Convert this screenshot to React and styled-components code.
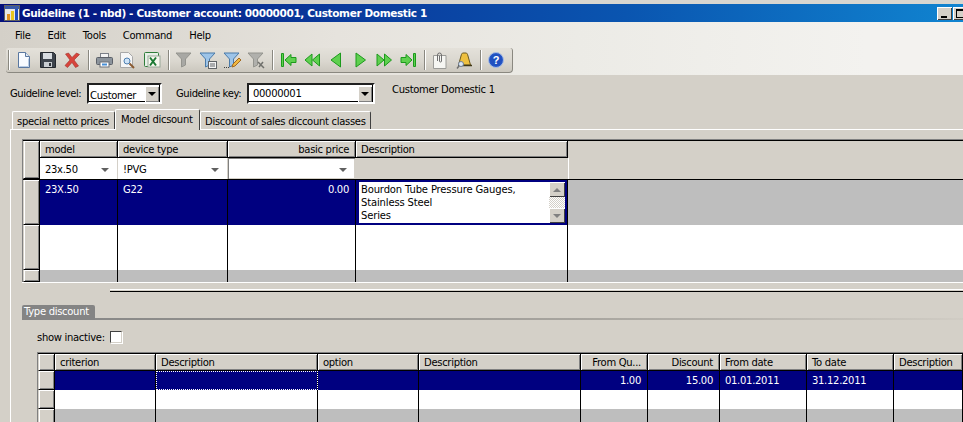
import React from 'react';
import styled, {createGlobalStyle} from 'styled-components';

const Global = createGlobalStyle`
	html, body {
		margin: 0;
		padding: 0;
		background: #d4d0c8;
	}
	body {
		font-family: "DejaVu Sans", sans-serif;
		font-size: 10px;
		letter-spacing: -0.3px;
		color: #000;
	}
`;

const Page = styled.div`
	width: 963px;
	height: 422px;
	overflow: hidden;
	background: #d4d0c8;
	display: flex;
	flex-direction: column;
`;

const TitleBar = styled.div`
	height: 18px;
	flex: none;
	border-top: 4px solid #d8d6d0;
	background: linear-gradient(90deg, #04107c 0%, #0a3a9c 35%, #0a55b0 65%, #1084d0 100%);
	display: flex;
	align-items: center;
	padding-left: 4px;
	gap: 2px;
`;

const TitleText = styled.span`
	color: #fff;
	font-weight: bold;
	font-size: 10.5px;
	letter-spacing: -0.37px;
	white-space: nowrap;
	flex: 1;
`;

const WinButton = styled.div`
	width: 15px;
	height: 13px;
	flex: none;
	background: #d4d0c8;
	box-shadow: inset 1px 1px 0 #fff, inset -1px -1px 0 #404040;
	position: relative;
	&::after {
		content: '';
		position: absolute;
		left: ${(p) => (p.$kind === 'min' ? '4px' : '3px')};
		top: ${(p) => (p.$kind === 'min' ? '9px' : '2px')};
		width: ${(p) => (p.$kind === 'min' ? '6px' : '9px')};
		height: ${(p) => (p.$kind === 'min' ? '2px' : '6px')};
		background: ${(p) => (p.$kind === 'min' ? '#000' : 'transparent')};
		border: ${(p) => (p.$kind === 'min' ? 'none' : '1px solid #000')};
		border-top-width: ${(p) => (p.$kind === 'min' ? '0' : '2px')};
	}
`;

const WinButtons = styled.div`
	display: flex;
	gap: 1px;
	margin-right: -5px;
`;

const TopBand = styled.div`
	height: 53px;
	flex: none;
	background: linear-gradient(90deg, #d4d0c8 0%, #e6e3dd 35%, #ecebe6 60%, #f3f2ef 90%);
`;

const MenuBar = styled.div`
	height: 26px;
	display: flex;
	align-items: center;
	padding-left: 15px;
	gap: 17px;
`;

const MenuItem = styled.span`
	display: block;
`;

const Toolbar = styled.div`
	width: 504px;
	height: 24px;
	margin-left: 6px;
	padding-left: 2px;
	display: flex;
	align-items: center;
	box-sizing: content-box;
	border-radius: 3px 3px 4px 3px;
	background: linear-gradient(180deg, #e4e1da 0%, #dad7cf 55%, #cbc7be 100%);
	border-bottom: 1px solid #8a8880;
	border-right: 1px solid #8a8880;
`;

const Grip = styled.div`
	width: 1px;
	height: 20px;
	background: #8a8880;
	border-right: 1px solid #fff;
	margin-right: 2px;
	flex: none;
`;

const ToolButton = styled.div`
	width: 24px;
	height: 24px;
	flex: none;
	display: flex;
	align-items: center;
	justify-content: center;
`;

const ToolSep = styled.div`
	width: 8px;
	flex: none;
	display: flex;
	justify-content: center;
	&::after {
		content: '';
		width: 1px;
		height: 20px;
		background: #8a8880;
		box-shadow: 1px 0 0 #fff;
	}
`;

const LookupRow = styled.div`
	height: 26px;
	flex: none;
	padding: 8px 0 0 10px;
	display: flex;
	align-items: flex-start;
`;

const FieldLabel = styled.span`
	width: ${(p) => p.$w}px;
	flex: none;
	line-height: 21px;
	letter-spacing: -0.4px;
	white-space: nowrap;
`;

const Combo = styled.div`
	width: ${(p) => p.$w}px;
	height: 21px;
	box-sizing: border-box;
	flex: none;
	background: #fff;
	border: 2px solid;
	border-color: #202020 #fff #fff #202020;
	display: flex;
	align-items: center;
	justify-content: space-between;
	padding-left: ${(p) => p.$pad}px;
	margin-right: ${(p) => p.$gap}px;
	box-shadow: inset -1px -1px 0 #000;
`;

const ComboValue = styled.span`
	padding-top: ${(p) => p.$drop}px;
`;

const ComboButton = styled.div`
	width: 14px;
	height: 16px;
	margin-right: 1px;
	background: #d4d0c8;
	box-shadow: inset 1px 1px 0 #fff, inset -1px -1px 0 #808080;
	display: flex;
	align-items: center;
	justify-content: center;
	flex: none;
	&::after {
		content: '';
		border: 4px solid transparent;
		border-top: 4px solid #000;
		border-bottom: 0;
	}
`;

const InfoText = styled.span`
	line-height: 14px;
`;

const TabStrip = styled.div`
	height: 20px;
	flex: none;
	padding-left: 12px;
	display: flex;
	align-items: flex-end;
	position: relative;
	z-index: 1;
`;

const Tab = styled.div`
	height: ${(p) => (p.$active ? 21 : 18)}px;
	box-sizing: border-box;
	margin-bottom: ${(p) => (p.$active ? -1 : 0)}px;
	width: ${(p) => p.$w}px;
	background: #d4d0c8;
	border-top: 1px solid #fff;
	border-left: 1px solid #fff;
	border-right: 1px solid #404040;
	border-top-left-radius: 2px;
	border-top-right-radius: 2px;
	padding-left: ${(p) => (p.$active ? 5 : 4)}px;
	line-height: 20px;
	white-space: nowrap;
`;

const TabPanel = styled.div`
	flex: 1;
	margin-left: 10px;
	border-top: 1px solid #fff;
	border-left: 1px solid #fff;
	padding: 9px 0 0 11px;
	display: flex;
	flex-direction: column;
	min-height: 0;
`;

const Table = styled.div`
	border-top: 1px solid #808080;
	border-left: 1px solid #808080;
	display: flex;
	flex-direction: column;
	flex: none;
`;

const Row = styled.div`
	display: flex;
	height: ${(p) => p.$h}px;
	flex: none;
	background: ${(p) => p.$bg || 'transparent'};
	border-top: ${(p) => (p.$rule ? '1px solid #000' : 'none')};
`;

const RowHead = styled.div`
	width: 17px;
	box-sizing: border-box;
	flex: none;
	background: #d4d0c8;
	border-left: 1px solid #d4d0c8;
	border-right: 1px solid #000;
	border-bottom: 1px solid #000;
	box-shadow: inset 1px 1px 0 #fff, inset -1px -1px 0 #808080;
`;

const HeadStack = styled.div`
	display: flex;
	flex: 1;
	flex-direction: column;
	min-width: 0;
`;

const Cell = styled.div`
	width: ${(p) => p.$w}px;
	flex: ${(p) => (p.$fill ? 1 : 'none')};
	box-sizing: border-box;
	background: ${(p) => p.$bg || 'transparent'};
	border-right: ${(p) => (p.$fill ? 'none' : '1px solid #000')};
	padding: ${(p) => (p.$right ? '3px 6px 0 0' : '3px 0 0 5px')};
	text-align: ${(p) => (p.$right ? 'right' : 'left')};
	color: ${(p) => (p.$sel ? '#fff' : '#000')};
	line-height: 13px;
	white-space: nowrap;
	overflow: hidden;
`;

const HeaderCell = styled.div`
	width: ${(p) => p.$w}px;
	flex: none;
	box-sizing: border-box;
	background: #d4d0c8;
	border-right: 1px solid #000;
	border-bottom: 1px solid #000;
	box-shadow: inset 1px 1px 0 #fff, inset -1px -1px 0 #808080;
	padding: ${(p) => (p.$right ? '0 6px 0 0' : '0 0 0 5px')};
	text-align: ${(p) => (p.$right ? 'right' : 'left')};
	line-height: 18px;
	white-space: nowrap;
	overflow: hidden;
`;

const HeaderBlank = styled.div`
	flex: 1;
	background: #d4d0c8;
`;

const FilterCell = styled.div`
	width: ${(p) => p.$w}px;
	flex: none;
	box-sizing: border-box;
	background: #fff;
	padding: 2px 8px 0 5px;
	display: flex;
	align-items: center;
	justify-content: space-between;
	border-right: 1px solid #d4d0c8;
	box-shadow: ${(p) => (p.$boxed ? 'inset 1px 1px 0 #808080, inset -1px -1px 0 #d4d0c8' : 'none')};
`;

const FilterArrow = styled.span`
	border: 4px solid transparent;
	border-top: 4px solid #606060;
	border-bottom: 0;
	margin-left: auto;
`;

const FilterBlank = styled.div`
	width: ${(p) => p.$w}px;
	flex: ${(p) => (p.$w ? 'none' : 1)};
	background: #d4d0c8;
	border-left: ${(p) => (p.$edge ? '1px solid #fff' : 'none')};
`;

const MemoCell = styled.div`
	width: 212px;
	flex: none;
	box-sizing: border-box;
	background: #000080;
	border-right: 1px solid #000;
	padding: 2px 2px 2px 3px;
`;

const Memo = styled.div`
	height: 41px;
	background: #fff;
	display: flex;
	padding-left: 2px;
`;

const MemoText = styled.div`
	flex: 1;
	line-height: 13px;
	letter-spacing: -0.15px;
	white-space: nowrap;
	padding-top: 1px;
`;

const Scroll = styled.div`
	width: 16px;
	flex: none;
	display: flex;
	flex-direction: column;
	background-color: #fff;
	background-image: conic-gradient(#d4d0c8 25%, #fff 0 50%, #d4d0c8 0 75%, #fff 0);
	background-size: 2px 2px;
	justify-content: space-between;
`;

const ScrollButton = styled.div`
	height: 15px;
	background: #d4d0c8;
	box-shadow: inset 1px 1px 0 #fff, inset -1px -1px 0 #404040;
	display: flex;
	align-items: center;
	justify-content: center;
	&::after {
		content: '';
		border: 4px solid transparent;
		${(p) => (p.$up ? 'border-bottom: 4px solid #808080; border-top: 0;' : 'border-top: 4px solid #808080; border-bottom: 0;')}
	}
`;

const Splitter = styled.div`
	flex: none;
	height: 1px;
	margin: 6px 0 0 88px;
	border-top: 1px solid #fff;
	border-bottom: 1px solid #000;
`;

const EdgeLine = styled.div`
	flex: none;
	height: 1px;
	background: #fff;
`;

const SectionHead = styled.div`
	flex: none;
	height: 15px;
	margin-top: 13px;
	display: flex;
	align-items: flex-end;
	background: linear-gradient(90deg, #848484 0%, #a8a59f 60%, #d0ccc4 100%) bottom / 100% 2px no-repeat;
`;

const SectionTitle = styled.div`
	width: 73px;
	height: 15px;
	box-sizing: border-box;
	background: #848484;
	color: #fff;
	border-radius: 2px 2px 0 0;
	padding-left: 2px;
	line-height: 14px;
`;

const InactiveRow = styled.div`
	flex: none;
	height: 14px;
	margin: 10px 0 8px 15px;
	display: flex;
	align-items: center;
	gap: 5px;
`;

const CheckBox = styled.div`
	width: 12px;
	height: 12px;
	box-sizing: border-box;
	background: #fff;
	border: 1px solid;
	border-color: #404040 #d4d0c8 #d4d0c8 #404040;
	box-shadow: 1px 1px 0 #fff;
`;

const LowerTable = styled(Table)`
	margin-left: 15px;
	margin-right: -12px;
`;

const FocusCell = styled(Cell)`
	outline: 1px dotted #fff;
	outline-offset: -1px;
`;

const AppIcon = () => (
	<svg width="16" height="16" viewBox="0 0 16 16">
		<rect x="0.500" y="0.500" width="15" height="15" fill="#e8e8e8" stroke="#606060" />
		<rect x="1" y="1" width="14" height="3" fill="#3a5aa8" />
		<rect x="3" y="9" width="3" height="6" fill="#e09020" />
		<rect x="7" y="6" width="3" height="9" fill="#e8c820" />
		<rect x="11" y="4" width="3" height="11" fill="#2050c0" />
	</svg>
);

const NavIcon = ({d, w = 18}) => (
	<svg width={w} height="16" viewBox={`0 0 ${w} 16`}>
		<path d={d} fill="#5fd04f" stroke="#1c9a1c" strokeWidth="1" strokeLinejoin="round" />
	</svg>
);

const FunnelBase = ({fill = '#9dc4e8', stroke = '#4a7aa8', children}) => (
	<svg width="18" height="18" viewBox="0 0 18 18">
		<path d="M1 2h15l-5.500 6v6l-4 2V8z" fill={fill} stroke={stroke} strokeLinejoin="round" />
		{children}
	</svg>
);

const icons = {
	newDoc: (
		<svg width="14" height="16" viewBox="0 0 14 16">
			<path d="M1.500.5h7l4 4v11h-11z" fill="#f8fbff" stroke="#5a78a0" />
			<path d="M8.500.5v4h4" fill="#dfe8f4" stroke="#5a78a0" />
			<path d="M2.500 14.500h9v-8" fill="none" stroke="#b8cce4" />
		</svg>
	),
	save: (
		<svg width="16" height="16" viewBox="0 0 16 16">
			<path d="M.5.5h13l2 2v13H.5z" fill="#3e444c" stroke="#24282e" />
			<rect x="3" y="1" width="9" height="6" fill="#d8dce0" />
			<rect x="4" y="10" width="8" height="5" fill="#c8ccd0" />
			<rect x="9" y="11" width="2" height="3" fill="#30343a" />
		</svg>
	),
	remove: (
		<svg width="16" height="16" viewBox="0 0 16 16">
			<path d="M1.500 2l3-1 3.500 4.500L12.500 1l3 1.500L10 8l4.500 6-3 1.500L8 10.500 3.500 15.500l-2.500-2L6 8z" fill="#d8443c" stroke="#a03028" strokeWidth=".6" />
		</svg>
	),
	print: (
		<svg width="17" height="16" viewBox="0 0 17 16">
			<rect x="4.500" y="1.500" width="8" height="5" fill="#f4f4f4" stroke="#7c8088" />
			<rect x=".5" y="5.500" width="16" height="7" rx="1" fill="#8c949c" stroke="#5c6068" />
			<rect x="4" y="10" width="9" height="5" fill="#fff" stroke="#6c7078" />
			<rect x="6" y="11.500" width="5" height="2" fill="#4890d8" />
		</svg>
	),
	preview: (
		<svg width="16" height="17" viewBox="0 0 16 17">
			<path d="M.5.5h8l4 4v11H.5z" fill="#f6f6f6" stroke="#a8a8a8" />
			<circle cx="7" cy="9" r="3" fill="#cfe4f8" stroke="#5080b0" />
			<path d="M9.500 11.500l4.500 4.500" stroke="#8a5a30" strokeWidth="2" />
		</svg>
	),
	excel: (
		<svg width="17" height="16" viewBox="0 0 17 16">
			<rect x=".5" y=".5" width="14" height="14" rx="1" fill="#e8f0e8" stroke="#2f7d3a" />
			<rect x="4" y="4" width="12" height="11" fill="#f8f8f0" stroke="#98a898" />
			<path d="M6 5.500l6 8M12 5.500l-6 8" stroke="#1c7a34" strokeWidth="2" />
		</svg>
	),
	filterOff: <FunnelBase fill="#a8a8a4" stroke="#94948e" />,
	filterForm: (
		<FunnelBase>
			<rect x="9.500" y="10.500" width="8" height="7" fill="#f4f4f4" stroke="#606468" />
			<path d="M11 13h5M11 15h5" stroke="#606468" />
		</FunnelBase>
	),
	filterEdit: (
		<FunnelBase>
			<path d="M1 16.500h5" stroke="#404040" strokeDasharray="1 1" />
			<path d="M9 16l1-3 6-6 2 2-6 6z" fill="#f0b840" stroke="#a06820" />
		</FunnelBase>
	),
	filterClear: (
		<FunnelBase fill="#b0b0ac" stroke="#94948e">
			<path d="M11 11l6 6M16 11l-4 5" stroke="#70706c" strokeWidth="1.500" />
		</FunnelBase>
	),
	first: <NavIcon w={17} d="M1.500 1.500h2v13h-2zM5 8l6-5.500v3h5v5h-5v3z" />,
	fastPrev: <NavIcon w={17} d="M1 8l7-6v12zM8.500 8l7-6v12z" />,
	prev: <NavIcon w={12} d="M1 8l9.500-7v14z" />,
	next: <NavIcon w={11} d="M1 1l9.500 7-9.500 7z" />,
	fastNext: <NavIcon w={17} d="M1 2l7 6-7 6zM8.500 2l7 6-7 6z" />,
	last: <NavIcon w={17} d="M1 5.500h5v-3l6 5.500-6 5.500v-3H1zM13.500 1.500h2v13h-2z" />,
	attach: (
		<svg width="14" height="17" viewBox="0 0 14 17">
			<path d="M.5 3.500h12.500v13H.5z" fill="#f6f6f2" stroke="#9c9c98" />
			<path d="M4.500 9V3a2 2 0 0 1 4 0v6a1 1 0 0 1-2 0V4" fill="none" stroke="#707070" />
		</svg>
	),
	alert: (
		<svg width="17" height="17" viewBox="0 0 17 17">
			<path d="M7 1h3c1 0 1.500 1 2 3l2.500 9h-12L5 4c.5-2 1-3 2-3z" fill="#eec040" stroke="#6c5a20" />
			<path d="M2 13.500h14" stroke="#403818" strokeWidth="1.500" />
			<circle cx="5" cy="12" r="2.500" fill="#dce8f4" stroke="#708098" />
			<path d="M3 14l-2 2.500" stroke="#707070" strokeWidth="1.500" />
		</svg>
	),
	help: (
		<svg width="16" height="16" viewBox="0 0 16 16">
			<circle cx="8" cy="8" r="7.500" fill="#2858c8" stroke="#a8bce0" />
			<circle cx="8" cy="8" r="6" fill="#2050c0" />
			<text x="8" y="12" textAnchor="middle" fontFamily="Liberation Sans, sans-serif" fontWeight="bold" fontSize="11" fill="#fff">?</text>
		</svg>
	),
};

const toolGroups = [
	['newDoc', 'save', 'remove'],
	['print', 'preview', 'excel'],
	['filterOff', 'filterForm', 'filterEdit', 'filterClear'],
	['first', 'fastPrev', 'prev', 'next', 'fastNext', 'last'],
	['attach', 'alert'],
	['help'],
];

const menus = ['File', 'Edit', 'Tools', 'Command', 'Help'];

const upperCols = [78, 110, 128, 212];

const lowerCols = [
	{w: 101, head: 'criterion'},
	{w: 162, head: 'Description'},
	{w: 101, head: 'option'},
	{w: 162, head: 'Description'},
	{w: 67, head: 'From Qu...', right: true, value: '1.00'},
	{w: 72, head: 'Discount', right: true, value: '15.00'},
	{w: 87, head: 'From date', value: '01.01.2011'},
	{w: 87, head: 'To date', value: '31.12.2011'},
	{w: 69, head: 'Description'},
];

const NAVY = '#000080';

export default function App() {
	return (
		<Page>
			<Global />
			<TitleBar>
				<AppIcon />
				<TitleText>Guideline (1 - nbd) - Customer account: 00000001, Customer Domestic 1</TitleText>
				<WinButtons>
					<WinButton $kind="min" />
					<WinButton $kind="max" />
				</WinButtons>
			</TitleBar>
			<TopBand>
				<MenuBar>
					{menus.map((m) => <MenuItem key={m}>{m}</MenuItem>)}
				</MenuBar>
				<Toolbar>
					<Grip />
					{toolGroups.map((group, i) => (
						<React.Fragment key={i}>
							{i > 0 && <ToolSep />}
							{group.map((name) => <ToolButton key={name}>{icons[name]}</ToolButton>)}
						</React.Fragment>
					))}
				</Toolbar>
			</TopBand>
			<LookupRow>
				<FieldLabel $w={77}>Guideline level:</FieldLabel>
				<Combo $w={75} $gap={14} $pad={1}><ComboValue $drop={3}>Customer</ComboValue><ComboButton /></Combo>
				<FieldLabel $w={71}>Guideline key:</FieldLabel>
				<Combo $w={128} $gap={17} $pad={4}><ComboValue $drop={0}>00000001</ComboValue><ComboButton /></Combo>
				<InfoText>Customer Domestic 1</InfoText>
			</LookupRow>
			<TabStrip>
				<Tab $w={103}>special netto prices</Tab>
				<Tab $w={85} $active>Model dicsount</Tab>
				<Tab $w={171}>Discount of sales diccount classes</Tab>
			</TabStrip>
			<TabPanel>
				<Table>
					<Row $h={38} $rule>
						<RowHead />
						<HeadStack>
							<Row $h={17}>
								<HeaderCell $w={78}>model</HeaderCell>
								<HeaderCell $w={110}>device type</HeaderCell>
								<HeaderCell $w={128} $right>basic price</HeaderCell>
								<HeaderCell $w={212}>Description</HeaderCell>
								<HeaderBlank />
							</Row>
							<Row $h={21}>
								<FilterCell $w={78}>23x.50<FilterArrow /></FilterCell>
								<FilterCell $w={110}>!PVG<FilterArrow /></FilterCell>
								<FilterCell $w={128} $boxed><FilterArrow /></FilterCell>
								<FilterBlank $w={212} />
								<FilterBlank $edge />
							</Row>
						</HeadStack>
					</Row>
					<Row $h={45} $bg="#bebebe" $rule>
						<RowHead />
						<Cell $w={78} $sel $bg={NAVY}>23X.50</Cell>
						<Cell $w={110} $sel $bg={NAVY}>G22</Cell>
						<Cell $w={128} $sel $right $bg={NAVY}>0.00</Cell>
						<MemoCell>
							<Memo>
								<MemoText>
									Bourdon Tube Pressure Gauges,<br />
									Stainless Steel<br />
									Series
								</MemoText>
								<Scroll>
									<ScrollButton $up />
									<ScrollButton />
								</Scroll>
							</Memo>
						</MemoCell>
						<Cell $fill />
					</Row>
					<Row $h={45} $bg="#fff">
						<RowHead />
						{upperCols.map((w, i) => <Cell key={i} $w={w} />)}
						<Cell $fill />
					</Row>
					<Row $h={12} $bg="#bebebe">
						<RowHead />
						{upperCols.map((w, i) => <Cell key={i} $w={w} />)}
						<Cell $fill />
					</Row>
				</Table>
				<EdgeLine />
				<Splitter />
				<SectionHead>
					<SectionTitle>Type discount</SectionTitle>
				</SectionHead>
				<InactiveRow>
					show inactive:
					<CheckBox />
				</InactiveRow>
				<LowerTable>
					<Row $h={17} $rule>
						<RowHead />
						{lowerCols.map((c, i) => (
							<HeaderCell key={i} $w={c.w} $right={c.right}>{c.head}</HeaderCell>
						))}
					</Row>
					<Row $h={19} $bg={NAVY}>
						<RowHead />
						{lowerCols.map((c, i) => (
							i === 1
								? <FocusCell key={i} $w={c.w} />
								: <Cell key={i} $w={c.w} $sel $right={c.right}>{c.value}</Cell>
						))}
					</Row>
					<Row $h={19} $bg="#fff">
						<RowHead />
						{lowerCols.map((c, i) => <Cell key={i} $w={c.w} />)}
					</Row>
					<Row $h={19} $bg="#bebebe">
						<RowHead />
						{lowerCols.map((c, i) => <Cell key={i} $w={c.w} />)}
					</Row>
				</LowerTable>
			</TabPanel>
		</Page>
	);
}
